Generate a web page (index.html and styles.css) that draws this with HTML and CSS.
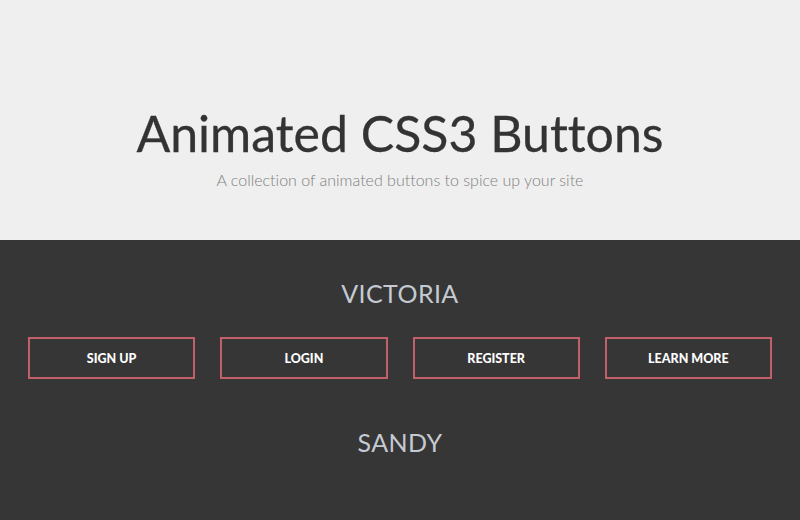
FILE: index.html
```html
<!DOCTYPE html>
<html>
<head>
<meta charset="utf-8">
<link rel="stylesheet" href="styles.css">
</head>
<body>
<header class="hero">
  <h1 class="title">Animated CSS3 Buttons</h1>
  <p class="subtitle">A collection of animated buttons to spice up your site</p>
</header>
<main class="dark">
  <section class="group">
    <h2 class="group-title">VICTORIA</h2>
    <div class="buttons">
      <a class="btn">SIGN UP</a>
      <a class="btn">LOGIN</a>
      <a class="btn">REGISTER</a>
      <a class="btn">LEARN MORE</a>
    </div>
  </section>
  <section class="group">
    <h2 class="group-title">SANDY</h2>
  </section>
</main>
</body>
</html>
```
FILE: styles.css
```css
html, body {
  margin: 0;
  padding: 0;
  height: 100%;
}
body {
  font-family: Lato, "Open Sans", sans-serif;
  background: #363636;
  overflow: hidden;
  font-variant-ligatures: none;
}
.hero {
  height: 240px;
  background: #efefef;
  display: flex;
  flex-direction: column;
  align-items: center;
  box-sizing: border-box;
  padding-top: 103px;
}
.title {
  margin: 0;
  font-size: 50px;
  font-weight: 400;
  color: #333333;
  line-height: 60px;
  -webkit-text-stroke: 0.3px #333333;
}
.subtitle {
  margin: 5px 0 0;
  font-size: 16px;
  font-weight: 300;
  color: #808080;
  line-height: 24px;
}
.dark {
  padding-top: 38px;
}
.group {
  display: flex;
  flex-direction: column;
  align-items: center;
}
.group-title {
  margin: 0;
  font-size: 25px;
  font-weight: 400;
  color: #c5cad2;
  line-height: 30px;
  letter-spacing: 0.4px;
}
.buttons {
  align-self: stretch;
  display: flex;
  gap: 25px;
  padding: 0 28px;
  margin-top: 29px;
  margin-bottom: 48px;
}
.btn {
  flex: 1;
  height: 42px;
  box-sizing: border-box;
  border: 2px solid #c0606b;
  display: flex;
  align-items: center;
  justify-content: center;
  color: #ffffff;
  font-size: 12.5px;
  font-weight: 900;
  letter-spacing: 0;
}
```
